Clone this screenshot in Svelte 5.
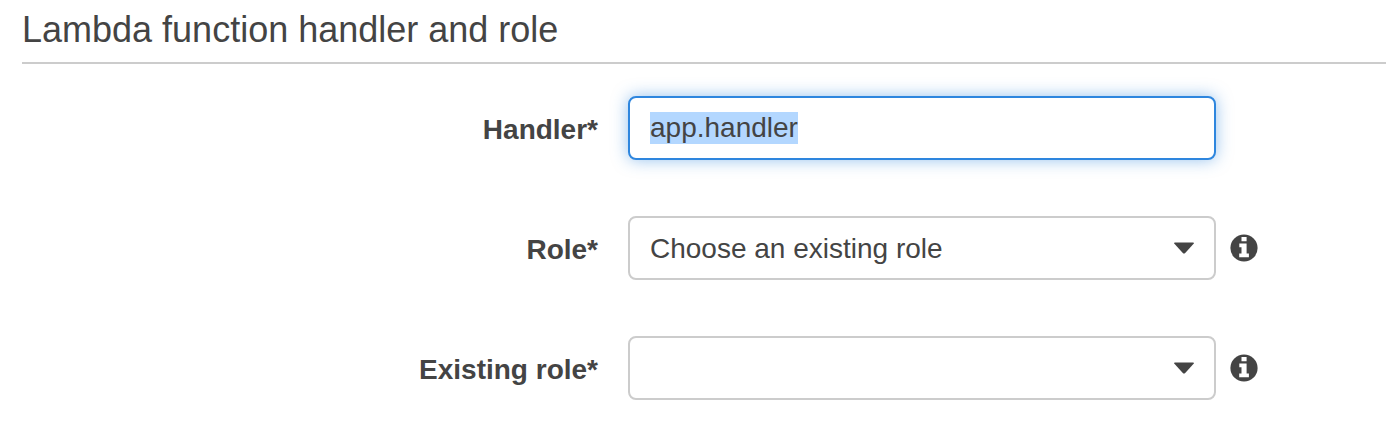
<script>
  import { onMount } from 'svelte';

  let handler = $state('app.handler');
  let role = $state('existing');
  let existingRole = $state('');
  let handlerInput;

  onMount(() => {
    handlerInput.focus();
    handlerInput.select();
  });
</script>

{#snippet caret()}
  <svg class="caret" viewBox="0 0 22 12" aria-hidden="true">
    <path d="M1.8 0.5H20.2Q21.6 0.5 20.6 1.7L12.2 10.9Q11 12.1 9.8 10.9L1.4 1.7Q0.4 0.5 1.8 0.5Z" />
  </svg>
{/snippet}

{#snippet info(label)}
  <button type="button" class="info" aria-label={label}>
    <svg viewBox="0 0 28 28" aria-hidden="true">
      <circle cx="14" cy="14" r="13.6" fill="#444" />
      <path d="M11.5 3H16.6V7.3H11.5ZM9.3 9.4H16.6V19.4H18.9V23.2H9.2V19.4H11.5V13.2H9.3Z" fill="#fff" />
    </svg>
  </button>
{/snippet}

<section>
  <h2>Lambda function handler and role</h2>
  <form>
    <div class="row">
      <label for="handler">Handler*</label>
      <input id="handler" type="text" bind:value={handler} bind:this={handlerInput} />
    </div>
    <div class="row">
      <label for="role">Role*</label>
      <div class="select">
        <select id="role" bind:value={role}>
          <option value="existing">Choose an existing role</option>
        </select>
        {@render caret()}
      </div>
      {@render info('About role')}
    </div>
    <div class="row">
      <label for="existing-role">Existing role*</label>
      <div class="select">
        <select id="existing-role" bind:value={existingRole}>
          <option value=""></option>
        </select>
        {@render caret()}
      </div>
      {@render info('About existing role')}
    </div>
  </form>
</section>

<style>
  :global(body) {
    margin: 0;
    background: #fff;
  }

  section {
    padding-left: 22px;
    color: #444;
    font-family: 'Helvetica Neue', 'Liberation Sans', Arial, sans-serif;
    font-size: 28px;
  }

  h2 {
    margin: 0;
    padding: 8px 0 10px;
    border-bottom: 2px solid #ccc;
    font-size: 36px;
    font-weight: 400;
    line-height: 44px;
  }

  form {
    display: grid;
    gap: 56px;
    padding: 32px 0;
  }

  .row {
    display: grid;
    grid-template-columns: 148fr 147fr 39fr;
    column-gap: 14px;
    align-items: center;
  }

  label {
    padding: 4px 16px 0 0;
    font-weight: 700;
    line-height: 32px;
    text-align: right;
  }

  input,
  select {
    box-sizing: border-box;
    width: 100%;
    height: 64px;
    margin: 0;
    padding: 0 20px;
    border: 2px solid #ccc;
    border-radius: 8px;
    outline: none;
    background: #fff;
    color: #444;
    font: inherit;
    appearance: none;
  }

  input:focus,
  select:focus {
    border-color: #2e86de;
    box-shadow: 0 0 16px rgba(46, 134, 222, 0.5);
  }

  input::selection {
    background: #b3d7ff;
    color: #444;
  }

  .select {
    display: grid;
    align-items: center;
  }

  .select > * {
    grid-area: 1 / 1;
  }

  .caret {
    justify-self: end;
    width: 22px;
    height: 12px;
    margin-right: 21px;
    fill: #444;
    pointer-events: none;
  }

  .info {
    width: 28px;
    height: 28px;
    padding: 0;
    border: 0;
    border-radius: 50%;
    background: none;
    cursor: pointer;
  }

  .info svg {
    display: block;
  }
</style>
